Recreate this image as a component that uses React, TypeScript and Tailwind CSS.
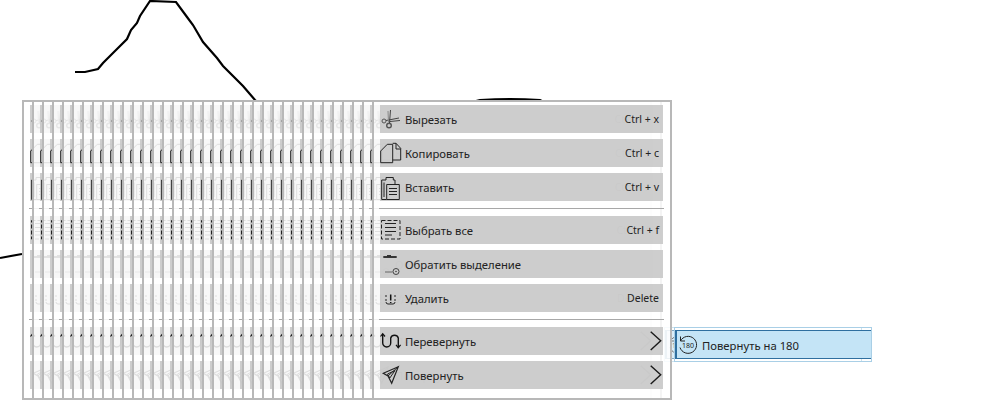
import type { ReactNode } from 'react';

const FONT = "font-['Noto_Sans',sans-serif]";

const IconBox = ({ children }: { children: ReactNode }) => (
  <svg width="24" height="28" viewBox="0 0 24 28" fill="none" stroke="#222" strokeWidth="1" className="shrink-0">
    {children}
  </svg>
);

const CutIcon = () => (
  <IconBox>
    <circle cx="4" cy="16" r="2" stroke="#555" />
    <circle cx="9" cy="20.5" r="2.3" strokeWidth="1.4" stroke="#555" />
    <path d="M10.5 5 L9.5 18 M6 15.5 L19 13 M10 16.5 L20 15.5" stroke="#444" />
    <path d="M8 6 L8.5 17" stroke="#888" />
  </IconBox>
);

const CopyIcon = () => (
  <IconBox>
    <path d="M0.7 12 L7.3 5.3 H12.7 V23.7 H0.7 Z" />
    <path d="M12.7 4.3 H16 L20.7 9.3 V21 H12.7" />
    <path d="M16 4.3 V10 H20.7" />
  </IconBox>
);

const PasteIcon = () => (
  <IconBox>
    <path d="M6 7 H1.7 V26.5 H6.5 M13.3 7 H15 V11" />
    <path d="M6 7 V4.5 H13.3 V7 M4 9.5 V24" />
    <path d="M6.7 11.5 H19.3 V26.5 H6.7 Z" />
    <path d="M9 15.5 H17 M9 18.5 H17 M9 21.5 H17" />
  </IconBox>
);

const SelectAllIcon = () => (
  <IconBox>
    <rect x="1.5" y="4.5" width="18.5" height="18.5" strokeDasharray="4 2" />
    <path d="M5 7.5 H16 M5 11.5 H16 M5 15.5 H16 M5 19 H12" />
  </IconBox>
);

const InvertIcon = () => (
  <IconBox>
    <path d="M3.3 7 H16.7" strokeWidth="1.6" stroke="#111" />
    <path d="M7 5.7 H11" stroke="#111" />
    <path d="M5 22 H12.5" stroke="#666" />
    <circle cx="16" cy="21.5" r="3" stroke="#444" />
    <circle cx="16" cy="21.5" r="0.7" fill="#222" stroke="none" />
  </IconBox>
);

const DeleteIcon = () => (
  <IconBox>
    <path d="M6 11 V13 M6 15 V17 M6 18 Q6 20 8 20 H13 Q15 20 15 18 M15 11 V13 M15 15 V17" />
    <path d="M10.7 10.5 V16.5 M10.7 18 V19" strokeWidth="1.5" stroke="#111" />
  </IconBox>
);

const FlipIcon = () => (
  <IconBox>
    <path d="M2.7 7 V16 A4 4 0 0 0 10.7 16 V11 A4 4 0 0 1 18.3 11 V20.5" strokeWidth="1.4" stroke="#111" />
    <path d="M0.5 9.5 L2.7 6.7 L5 9.5 M16 17.8 L18.3 20.7 L20.6 17.8" strokeWidth="1.2" stroke="#111" />
  </IconBox>
);

const RotateIcon = () => (
  <IconBox>
    <path d="M18.3 5.7 L3.3 12.3 L8 15 L11.7 22.3 Z" strokeWidth="1.2" />
    <path d="M18.3 5.7 L8 15 M15 9.5 L7.5 13 L9.8 17 Z" />
  </IconBox>
);

const Chevron = () => (
  <svg width="12" height="20" viewBox="0 0 12 20" fill="none" stroke="#1a1a1a" strokeWidth="1.4" className="shrink-0">
    <path d="M0.7 0.7 L10.7 9.8 L0.7 19" />
  </svg>
);

interface RowProps {
  icon: ReactNode;
  label: string;
  shortcut?: string;
  submenu?: boolean;
}

const Row = ({ icon, label, shortcut, submenu }: RowProps) => (
  <div className="flex h-7 items-center bg-[#c6c6c6]/85 text-[11.3px] text-[#222]">
    {icon}
    <span className="ml-px flex-1 pt-0.5 whitespace-nowrap">{label}</span>
    {shortcut && <span className="pt-0.5 pr-1 text-[10.5px] whitespace-nowrap">{shortcut}</span>}
    {submenu && <span className="flex pr-px"><Chevron /></span>}
  </div>
);

const Separator = () => <div className="-mx-px h-px bg-[#a8a8a8]" />;

const Menu = ({ left }: { left: number }) => (
  <div
    className={`absolute top-[100px] flex h-[300px] w-[300px] flex-col border-2 border-[#b8b8b8] bg-white/85 pt-[3px] pr-[7px] pl-1.5 ${FONT}`}
    style={{ left }}
  >
    <div className="flex flex-col gap-1.5">
      <Row icon={<CutIcon />} label="Вырезать" shortcut="Ctrl + x" />
      <Row icon={<CopyIcon />} label="Копировать" shortcut="Ctrl + c" />
      <Row icon={<PasteIcon />} label="Вставить" shortcut="Ctrl + v" />
    </div>
    <div className="pt-[7px] pb-[7px]"><Separator /></div>
    <div className="flex flex-col gap-1.5">
      <Row icon={<SelectAllIcon />} label="Выбрать все" shortcut="Ctrl + f" />
      <Row icon={<InvertIcon />} label="Обратить выделение" />
      <Row icon={<DeleteIcon />} label="Удалить" shortcut="Delete" />
    </div>
    <div className="pt-[7px] pb-[7px]"><Separator /></div>
    <div className="flex flex-col gap-1.5">
      <Row icon={<FlipIcon />} label="Перевернуть" submenu />
      <Row icon={<RotateIcon />} label="Повернуть" submenu />
    </div>
  </div>
);

const Rotate180Icon = () => (
  <div className="relative h-5 w-5 shrink-0">
    <svg width="20" height="20" viewBox="0 0 20 20" fill="none" stroke="#222" strokeWidth="1" className="absolute inset-0">
      <path d="M2.5 6 A8.5 8.5 0 1 1 2 12.5" />
      <path d="M2.5 1.5 V6 H7" />
    </svg>
    <span className="absolute inset-0 flex items-center justify-center pt-px text-[7px] leading-none text-[#222]">180</span>
  </div>
);

const SubMenu = ({ left, ghost }: { left: number; ghost?: boolean }) => (
  <div
    className={`absolute top-[327px] h-[35px] w-[198px] border border-[#a9cfe6] py-0.5 ${FONT} ${ghost ? 'opacity-60' : ''}`}
    style={{ left }}
  >
    <div className="flex h-full items-center gap-1 border-y border-l-2 border-[#2f6f9f] bg-[#c4e4f6] pl-px text-[11.3px] text-[#222]">
      <Rotate180Icon />
      <span className="pt-1 whitespace-nowrap">Повернуть на 180</span>
    </div>
  </div>
);

export default function App() {
  const lefts = Array.from({ length: 36 }, (_, i) => 22 + i * 10);

  return (
    <div className="relative h-[400px] w-[1000px] overflow-hidden bg-white">
      {/* pen stroke on the canvas behind the menus */}
      <svg width="1000" height="400" className="absolute inset-0" fill="none" stroke="#000" strokeWidth="2.2">
        <path d="M75 72 L85 72 L98 69 L103 63 L115 51 L127 39 L131 30 L137 23 L140 16 L150 1 L176 2 L187 17 L193 25 L203 42 L217 58 L223 66 L243 86 L255 100 L300 140 L400 120 L480 100 Q510 98 540 100 L600 130" />
        <path d="M0 258 L22 254" />
      </svg>
      <SubMenu left={664} ghost />
      {lefts.map((left) => (
        <Menu key={left} left={left} />
      ))}
      <SubMenu left={674} />
    </div>
  );
}
